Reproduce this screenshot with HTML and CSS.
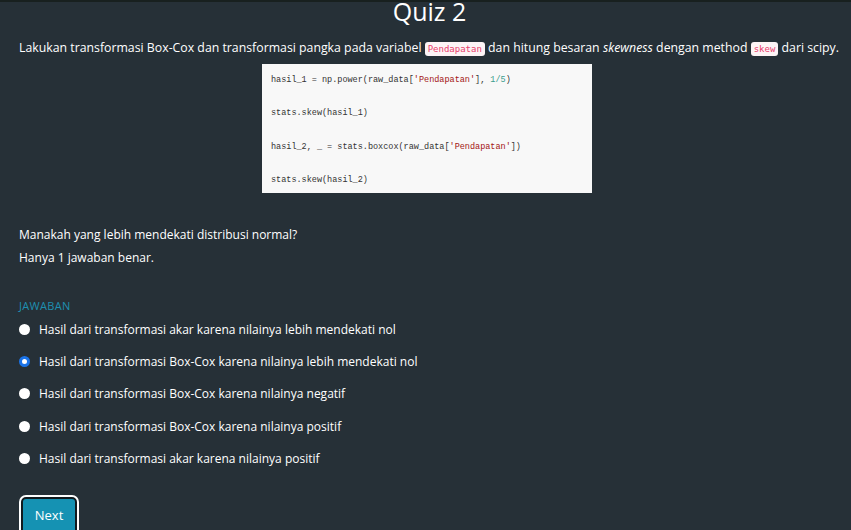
FILE: index.html
```html
<!DOCTYPE html>
<html lang="id">
<head>
<meta charset="utf-8">
<title>Quiz 2</title>
<link rel="stylesheet" href="styles.css">
</head>
<body>
<div class="topbar"></div>
<main class="quiz">
  <h1 class="title">Quiz 2</h1>
  <p class="intro">Lakukan transformasi Box-Cox dan transformasi pangka pada variabel <code class="chip">Pendapatan</code> dan hitung besaran <em>skewness</em> dengan method <code class="chip">skew</code> dari scipy.</p>
  <div class="code-wrap">
    <div class="code">
      <div class="line">hasil_1 = np.power(raw_data[<span class="str">'Pendapatan'</span>], <span class="num">1/5</span>)</div>
      <div class="line">stats.skew(hasil_1)</div>
      <div class="line">hasil_2, _ = stats.boxcox(raw_data[<span class="str">'Pendapatan'</span>])</div>
      <div class="line">stats.skew(hasil_2)</div>
    </div>
  </div>
  <p class="question">Manakah yang lebih mendekati distribusi normal?</p>
  <p class="hint">Hanya 1 jawaban benar.</p>
  <div class="answers">
    <div class="answers-label">JAWABAN</div>
    <label class="option"><span class="radio"></span><span>Hasil dari transformasi akar karena nilainya lebih mendekati nol</span></label>
    <label class="option"><span class="radio checked"></span><span>Hasil dari transformasi Box-Cox karena nilainya lebih mendekati nol</span></label>
    <label class="option"><span class="radio"></span><span>Hasil dari transformasi Box-Cox karena nilainya negatif</span></label>
    <label class="option"><span class="radio"></span><span>Hasil dari transformasi Box-Cox karena nilainya positif</span></label>
    <label class="option"><span class="radio"></span><span>Hasil dari transformasi akar karena nilainya positif</span></label>
  </div>
  <button class="next" type="button">Next</button>
</main>
</body>
</html>
```

FILE: styles.css
```css
* { box-sizing: border-box; }
html, body { margin: 0; padding: 0; }
body {
  background: #263037;
  color: #ffffff;
  font-family: "Open Sans", "Liberation Sans", sans-serif;
  height: 530px;
  overflow: hidden;
}
.topbar {
  height: 2px;
  background: #18201f;
}
.quiz {
  padding: 0 19px;
}
.title {
  margin: -2px 0 0 0;
  font-size: 25px;
  line-height: 22px;
  font-weight: 500;
  text-align: center;
  padding-left: 8px;
}
.intro {
  margin: 16px 0 0 0;
  font-size: 12.3px;
  line-height: 20px;
  white-space: nowrap;
}
.chip {
  font-family: "DejaVu Sans Mono", monospace;
  font-size: 9px;
  color: #e83e6c;
  background: #fdf4f6;
  border-radius: 3px;
  padding: 2px 3px;
}
.code-wrap {
  display: flex;
  justify-content: center;
  margin-top: 5px;
}
.code {
  width: 330px;
  height: 129px;
  background: #f8f8f8;
  padding: 10px 9px 7px 9px;
  display: flex;
  flex-direction: column;
  justify-content: space-between;
  margin-left: 3px;
}
.line {
  font-family: "Liberation Mono", monospace;
  font-size: 8.5px;
  line-height: 12px;
  color: #333;
  white-space: pre;
}
.str { color: #a31515; }
.num { color: #3c9d8f; }
.question {
  margin: 34px 0 0 0;
  font-size: 12px;
  line-height: 16px;
}
.hint {
  margin: 7px 0 0 0;
  font-size: 12px;
  line-height: 16px;
}
.answers {
  margin-top: 33px;
}
.answers-label {
  color: #1e8fb0;
  font-size: 11px;
  line-height: 14px;
  letter-spacing: 0.3px;
}
.option {
  display: flex;
  align-items: center;
  gap: 9px;
  height: 32.3px;
  font-size: 12px;
}
.radio {
  width: 11px;
  height: 11px;
  border-radius: 50%;
  background: #fff;
  flex: none;
}
.radio.checked {
  border: 3px solid #1a73e8;
}
.next {
  margin: 23px 0 0 2px;
  width: 56px;
  height: 40px;
  background: #1592b3;
  color: #fff;
  font-family: "Open Sans", "Liberation Sans", sans-serif;
  font-size: 13px;
  padding: 0 0 4px 0;
  border: 2px solid #111a1e;
  outline: 2px solid #ffffff;
  outline-offset: 0;
  border-radius: 5px;
}
```
